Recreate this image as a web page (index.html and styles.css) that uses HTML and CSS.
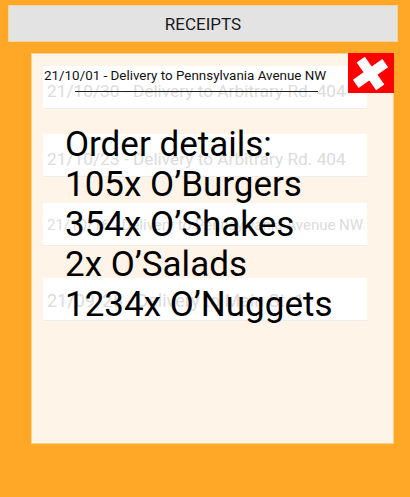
FILE: index.html
```html
<!DOCTYPE html>
<html>
<head>
<meta charset="utf-8">
<link rel="stylesheet" href="styles.css">
</head>
<body>
<header class="bar">RECEIPTS</header>
<main class="panel">
  <ul class="list">
    <li class="row row-1"><span class="faded f-17">21/10/30 - Delivery to Arbitrary Rd. 404</span></li>
    <li class="row row-2"><span class="faded f-17">21/10/23 - Delivery to Arbitrary Rd. 404</span></li>
    <li class="row row-3"><span class="faded f-15">21/10/16 - Delivery to Pennsylvania Avenue NW</span></li>
    <li class="row row-4"><span class="faded f-18">21/09/25 - Delivery to Main St. 1</span></li>
  </ul>
  <section class="details">
    <div class="title">21/10/01 - Delivery to Pennsylvania Avenue NW</div>
    <div class="rule"></div>
    <div class="order">
      <div>Order details:</div>
      <div>105x O’Burgers</div>
      <div>354x O’Shakes</div>
      <div>2x O’Salads</div>
      <div>1234x O’Nuggets</div>
    </div>
  </section>
  <button class="close" aria-label="close">
    <svg width="46" height="40" viewBox="0 0 46 40">
      <g transform="translate(22.5 20.5) rotate(-35)">
        <rect x="-18" y="-5" width="36" height="10" fill="#fff"/>
        <rect x="-5" y="-17" width="10" height="34" fill="#fff"/>
      </g>
    </svg>
  </button>
</main>
</body>
</html>
```

FILE: styles.css
```css
html, body {
  margin: 0;
  padding: 0;
}
body {
  background: #FFA726;
  font-family: Roboto, "Noto Sans", sans-serif;
  width: 410px;
  height: 497px;
  padding: 5px 12px 0 8px;
  box-sizing: border-box;
  overflow: hidden;
}
.bar {
  height: 37px;
  box-sizing: border-box;
  background: #E3E3E3;
  border: 1px solid #F3D3A0;
  display: flex;
  align-items: center;
  justify-content: center;
  font-size: 17px;
  color: #1a1a1a;
}
.panel {
  position: relative;
  margin: 11px 0 0 23px;
  width: 363px;
  height: 391px;
  box-sizing: border-box;
  background: #FFF4E7;
  border: 1px solid #FFD38F;
  padding: 12px 26px 0 11px;
}
.list {
  list-style: none;
  margin: 0;
  padding: 0;
  display: flex;
  flex-direction: column;
}
.row {
  height: 43px;
  background: #fff;
  border-bottom: 1px solid #ECECEC;
  box-sizing: border-box;
  display: flex;
  align-items: center;
  padding: 2px 4px 0;
  white-space: nowrap;
  overflow: hidden;
}
.row-2 { margin-top: 25px; }
.row-3 { margin-top: 26px; }
.row-4 { margin-top: 32px; }
.faded { color: #DCDCDC; }
.f-15 { font-size: 15px; }
.f-17 { font-size: 17.3px; padding-top: 5px; }
.f-18 { font-size: 18px; }
.details {
  position: absolute;
  left: 12px;
  top: 14px;
  right: 0;
}
.title {
  font-size: 13.4px;
  color: #111;
  line-height: 16px;
  white-space: nowrap;
}
.rule {
  margin: 7px 0 0 31px;
  width: 243px;
  height: 1px;
  background: #222;
}
.order {
  margin: 33px 0 0 21px;
  font-size: 35px;
  line-height: 40px;
  color: #000;
}
.close {
  position: absolute;
  top: -1px;
  right: -1px;
  width: 46px;
  height: 40px;
  padding: 0;
  margin: 0;
  border: none;
  background: #FF0000;
  display: block;
}
.close svg { display: block; }
```
